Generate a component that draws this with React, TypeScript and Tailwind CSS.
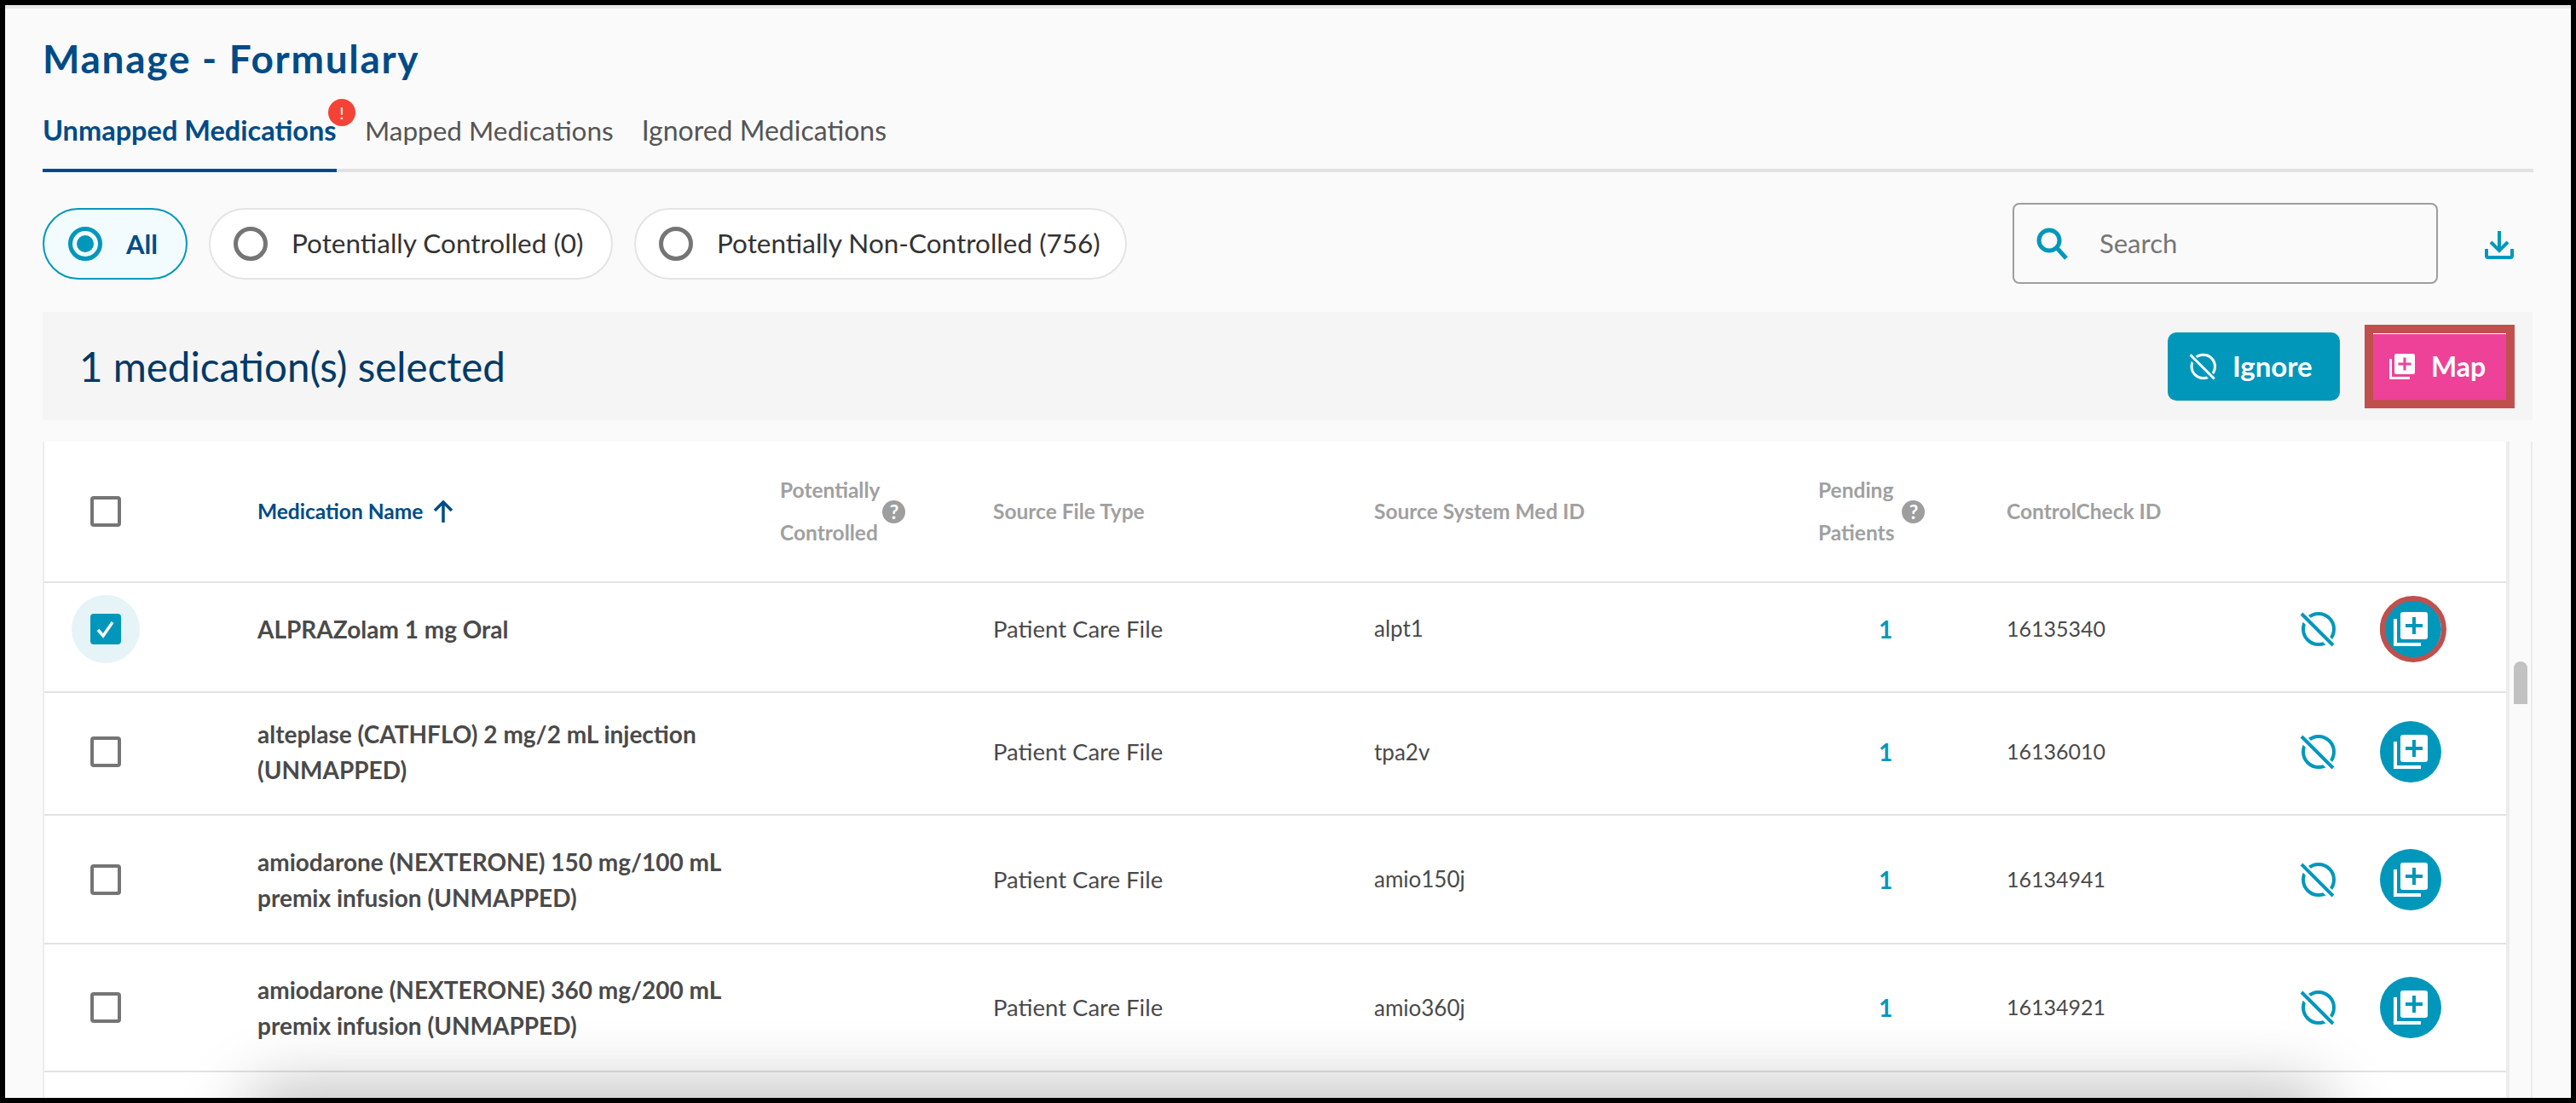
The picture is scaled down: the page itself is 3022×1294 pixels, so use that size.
import React from "react";

const font = { fontFamily: '"Lato", "Open Sans", sans-serif' };
const grid = "grid grid-cols-[250px_613px_250px_447px_521px_221px_346px_92px_72px] items-center border-b-2 border-[#e2e2e2]";

const IgnoreIcon = ({ stroke = "#0097bb", gap = "#ffffff", size = 42 }: { stroke?: string; gap?: string; size?: number }) => (
  <svg width={size} height={size} viewBox="0 0 42 42" fill="none">
    <circle cx="22" cy="21" r="18" stroke={stroke} strokeWidth="4" />
    <path d="M2 4 L38 40" stroke={gap} strokeWidth="10" />
    <path d="M2 3 L39 40" stroke={stroke} strokeWidth="4" />
  </svg>
);

const LibraryAdd = ({ fg = "#ffffff", bg = "#0097bb", size = 40 }: { fg?: string; bg?: string; size?: number }) => (
  <svg width={size} height={size} viewBox="0 0 40 40">
    <path d="M0 8h4v28h28v4H0z" fill={fg} />
    <rect x="8" y="0" width="32" height="32" rx="3" fill={fg} />
    <path d="M22 6h4v8h8v4h-8v8h-4v-8h-8v-4h8z" fill={bg} />
  </svg>
);

const Help = () => (
  <span className="flex h-[27px] w-[27px] items-center justify-center rounded-full bg-[#9e9e9e] text-[23px] font-bold leading-none text-white">?</span>
);

const Box = ({ checked }: { checked?: boolean }) =>
  checked ? (
    <div className="flex h-20 w-20 items-center justify-center rounded-full bg-[#e6f4f8]">
      <div className="flex h-9 w-9 items-center justify-center rounded-[4px] bg-[#0097bb]">
        <svg width="28" height="28" viewBox="0 0 28 28" fill="none">
          <path d="M5 15l6 7L22 6" stroke="#fff" strokeWidth="3.5" />
        </svg>
      </div>
    </div>
  ) : (
    <div className="h-9 w-9 rounded-[4px] border-4 border-[#757575] bg-white" />
  );

const rows = [
  { h: "h-[129px] pb-[20px]", name: ["ALPRAZolam 1 mg Oral"], sys: "alpt1", id: "16135340", sel: true },
  { h: "h-[144px] pb-[4px]", name: ["alteplase (CATHFLO) 2 mg/2 mL injection", "(UNMAPPED)"], sys: "tpa2v", id: "16136010" },
  { h: "h-[151px]", name: ["amiodarone (NEXTERONE) 150 mg/100 mL", "premix infusion (UNMAPPED)"], sys: "amio150j", id: "16134941" },
  { h: "h-[150px]", name: ["amiodarone (NEXTERONE) 360 mg/200 mL", "premix infusion (UNMAPPED)"], sys: "amio360j", id: "16134921" },
];

const Pill = ({ label, w }: { label: string; w: string }) => (
  <div className={`flex h-[84px] ${w} items-center rounded-[42px] border-2 border-[#e4e4e4] bg-white pl-[27px]`}>
    <span className="h-10 w-10 rounded-full border-[5px] border-[#757575]" />
    <span className="ml-[28px] whitespace-nowrap text-[31.5px] text-[#333333]">{label}</span>
  </div>
);

export default function App() {
  return (
    <div style={font} className="h-[1294px] w-[3022px] overflow-hidden border-[6px] border-black bg-[#fafafa]">
      <div className="relative h-[1282px] w-[3010px] overflow-hidden border-t-4 border-[#e8e8e8] px-[44px]">
        <h1 className="mt-[31px] text-[46px] font-bold leading-[56px] tracking-[1.7px] text-[#004b87]">Manage - Formulary</h1>

        <div className="mt-[14px] flex h-[91px] w-[2922px] items-start border-b-4 border-[#e2e2e2]">
          <div className="relative h-[91px] w-[345px] border-b-4 border-[#004b87] pt-[24px] text-[32.5px] font-bold leading-[36px] text-[#004b87] whitespace-nowrap">
            Unmapped Medications
            <span className="absolute -right-[22px] top-[5px] flex h-8 w-8 items-center justify-center rounded-full bg-[#f44336] text-[20px] font-normal leading-none text-white">!</span>
          </div>
          <div className="ml-[33px] pt-[24px] text-[31.5px] leading-[36px] text-[#555555] whitespace-nowrap">Mapped Medications</div>
          <div className="ml-[33px] pt-[24px] text-[32px] leading-[36px] text-[#555555] whitespace-nowrap">Ignored Medications</div>
        </div>

        <div className="mt-[42px] flex h-[95px] w-[2922px] items-start">
          <div className="flex h-[84px] w-[170px] items-center rounded-[42px] border-2 border-[#0097bb] bg-[#f2fbfe] pl-[28px]">
            <span className="flex h-10 w-10 items-center justify-center rounded-full border-[5px] border-[#0097bb]">
              <span className="h-5 w-5 rounded-full bg-[#0097bb]" />
            </span>
            <span className="ml-[28px] text-[31px] font-bold text-[#004b87]">All</span>
          </div>
          <div className="ml-[25px]"><Pill label="Potentially Controlled (0)" w="w-[474px]" /></div>
          <div className="ml-[25px]"><Pill label="Potentially Non-Controlled (756)" w="w-[578px]" /></div>
          <div className="ml-auto -mt-[6px] flex h-[95px] w-[499px] items-center rounded-[8px] border-2 border-[#9e9e9e] pl-[26px]">
            <svg width="38" height="38" viewBox="0 0 38 38" fill="none">
              <circle cx="15" cy="15" r="12" stroke="#0097bb" strokeWidth="5" />
              <path d="M24 24l11 12" stroke="#0097bb" strokeWidth="5" />
            </svg>
            <span className="ml-[36px] text-[31px] text-[#757575]">Search</span>
          </div>
          <div className="ml-[55px] mr-[23px] mt-[26px]">
            <svg width="34" height="34" viewBox="0 0 34 34" fill="none">
              <path d="M17 1v22M7 14l10 10 10-10" stroke="#0097bb" strokeWidth="4" />
              <path d="M2 22v8a2 2 0 0 0 2 2h26a2 2 0 0 0 2-2v-8" stroke="#0097bb" strokeWidth="4" />
            </svg>
          </div>
        </div>

        <div className="mt-[27px] flex h-[127px] w-[2921px] items-center bg-[#f5f5f5] pl-[43px]">
          <span className="text-[47.5px] leading-none text-[#003a66]">1 medication(s) selected</span>
          <div className="ml-auto flex h-20 w-[202px] items-center rounded-[10px] bg-[#0097bb] pl-[25px] text-[33px] font-bold text-white">
            <IgnoreIcon stroke="#ffffff" gap="#0097bb" size={32} />
            <span className="ml-[19px]">Ignore</span>
          </div>
          <div className="ml-[29px] mr-[21px] box-content flex h-[78px] w-[156px] items-center border-[10px] border-[#c0504d] bg-[#ee4198] shadow-[inset_0_1px_0_#ffffff]">
            <span className="ml-[19px]"><LibraryAdd fg="#ffffff" bg="#ee4198" size={30} /></span>
            <span className="ml-[19px] text-[32px] font-bold text-white">Map</span>
          </div>
        </div>

        <div className="mt-[25px] flex h-[780px] w-[2921px] items-start">
          <div className="h-full w-[2894px] border-l-2 border-r-4 border-[#ececec] bg-white">
            <div className={`${grid} h-[166px] text-[24.5px] font-bold text-[#a0a0a0]`}>
              <div className="flex justify-center pr-[106px]"><Box /></div>
              <div className="flex items-center text-[#004b87]">
                Medication Name
                <svg className="ml-[10px]" width="28" height="28" viewBox="0 0 28 28" fill="none">
                  <path d="M14 27V3M4 13l10-10 10 10" stroke="#004b87" strokeWidth="3.5" />
                </svg>
              </div>
              <div className="flex items-center">
                <div className="leading-[50px]">Potentially<br />Controlled</div>
                <span className="ml-[3px]"><Help /></span>
              </div>
              <div>Source File Type</div>
              <div>Source System Med ID</div>
              <div className="flex items-center">
                <div className="leading-[50px]">Pending<br />Patients</div>
                <span className="ml-[9px]"><Help /></span>
              </div>
              <div>ControlCheck ID</div>
              <div />
              <div />
            </div>
            {rows.map((r) => (
              <div key={r.id} className={`${grid} ${r.h} text-[25px] text-[#4a4a4a]`}>
                <div className="flex justify-center pr-[106px]"><Box checked={r.sel} /></div>
                <div className="text-[28px] font-bold leading-[42px] text-[#4a4a4a]">
                  {r.name.map((n) => <div key={n} className="whitespace-nowrap">{n}</div>)}
                </div>
                <div />
                <div className="text-[27.5px]">Patient Care File</div>
                <div className="text-[26px]">{r.sys}</div>
                <div className="pl-[71px] text-[28px] font-bold text-[#0097bb]">1</div>
                <div>{r.id}</div>
                <div className="-ml-[2px]"><IgnoreIcon /></div>
                <div className="relative flex h-[72px] w-[72px] items-center justify-center rounded-full bg-[#0097bb]">
                  {r.sel && <span className="absolute -top-[3px] left-0 h-[78px] w-[78px] rounded-full border-[6px] border-[#c0504d]" />}
                  <span className="relative"><LibraryAdd /></span>
                </div>
              </div>
            ))}
          </div>
          <div className="relative h-full w-[27px] border-r-2 border-[#ececec]">
            <div className="absolute left-[5px] top-[258px] h-[50px] w-4 rounded-t-[8px] bg-[#c2c2c2]" />
          </div>
        </div>

        <div className="absolute bottom-[-70px] left-[290px] h-[70px] w-[2430px] rounded-[40px] shadow-[0_0_80px_10px_rgba(0,0,0,0.28)]" />
      </div>
    </div>
  );
}
